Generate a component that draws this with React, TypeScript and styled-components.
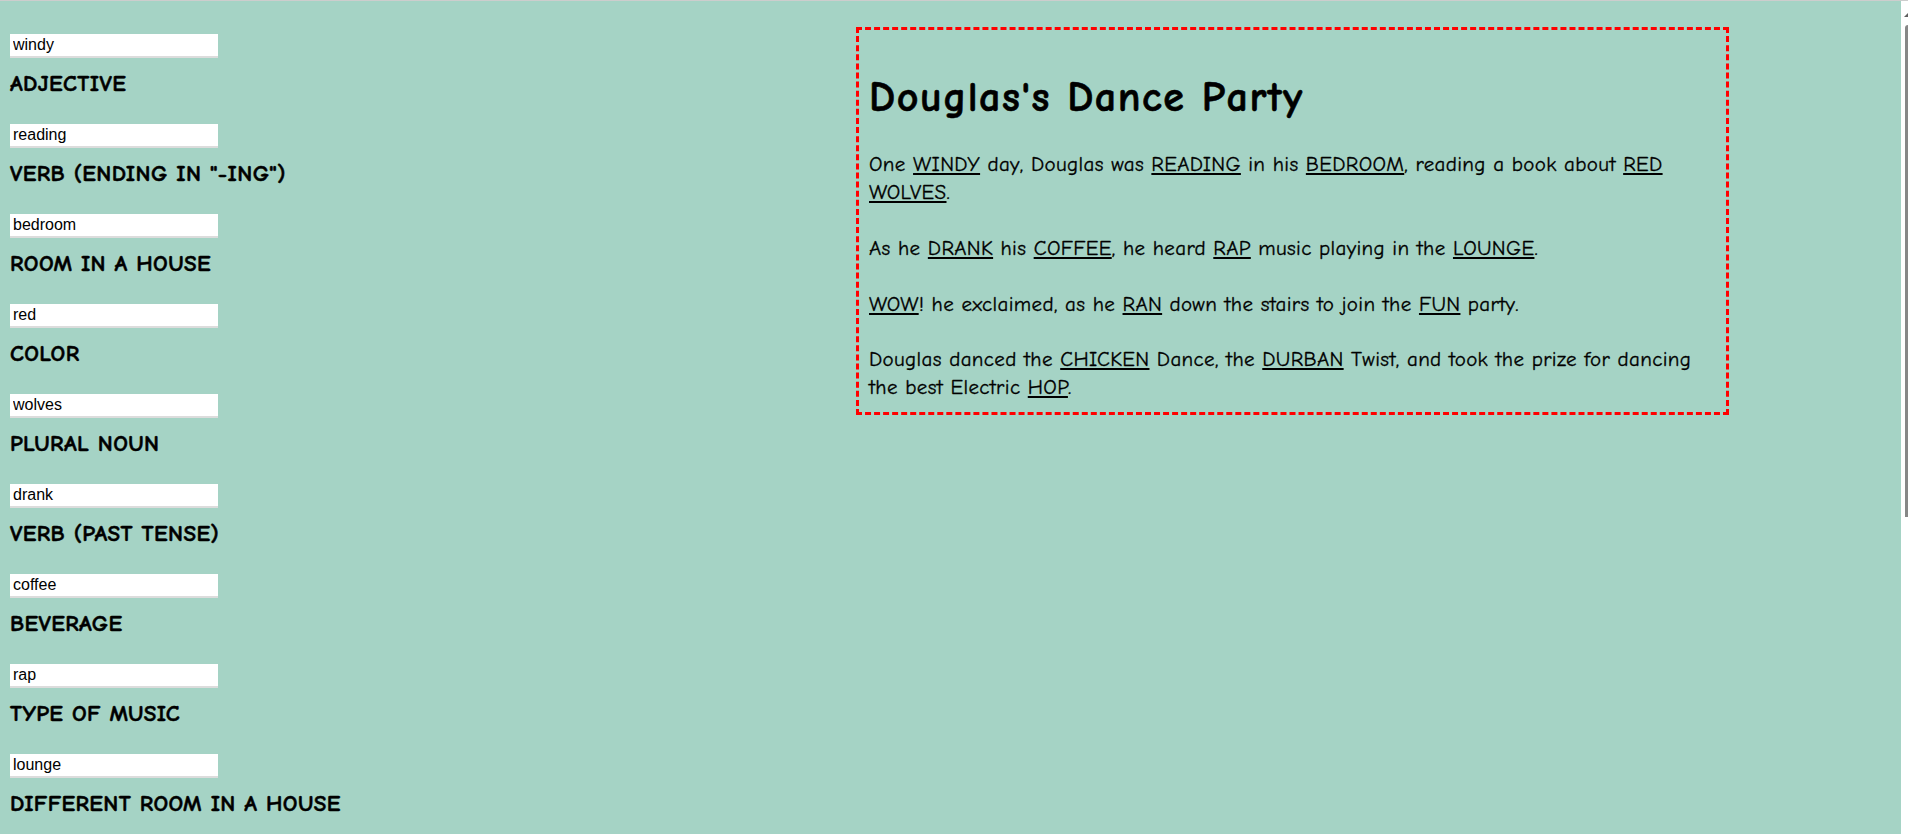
import React, { useState } from "react";
import styled, { createGlobalStyle } from "styled-components";

const FONT = `"Comic Sans MS", "Comic Neue", "Open Sans", sans-serif`;

const GlobalStyle = createGlobalStyle`
  html, body {
    margin: 0;
    padding: 0;
    background: #a5d3c5;
    overflow: hidden;
  }
  body {
    font-family: ${FONT};
    color: #000;
  }
`;

const Page = styled.div`
  display: flex;
  align-items: flex-start;
  border-top: 1px solid #cdcdcd;
  padding: 0 10px;
  min-height: 833px;
`;

const FormColumn = styled.div`
  width: 846px;
  flex: none;
  display: flex;
  flex-direction: column;
  padding-top: 33px;
`;

const Field = styled.div`
  display: flex;
  flex-direction: column;
  align-items: flex-start;
  height: 90px;
`;

const WordInput = styled.input`
  box-sizing: border-box;
  width: 208px;
  height: 24px;
  margin: 0;
  padding: 0 3px;
  border: none;
  border-bottom: 2px solid #dcdcdc;
  background: #fff;
  font-family: "Liberation Sans", Arial, sans-serif;
  font-size: 16px;
  color: #000;
  outline: none;
`;

const FieldLabel = styled.label`
  margin-top: 10.5px;
  font-family: ${FONT};
  font-weight: 700;
  font-size: 23px;
  line-height: 30px;
  letter-spacing: 0.4px;
  text-transform: uppercase;
  -webkit-text-stroke: 0.5px #000;
`;

const StoryBox = styled.section`
  box-sizing: border-box;
  width: 873px;
  flex: none;
  margin-top: 26px;
  padding: 10px;
  border: 3px dashed #ff0000;
`;

const Title = styled.h1`
  margin: 30px 0 25px;
  font-size: 42px;
  line-height: 56px;
  font-weight: 700;
  letter-spacing: 1.5px;
  -webkit-text-stroke: 0.6px #000;
`;

const StoryText = styled.div`
  font-size: 21px;
  line-height: 27.9px;
  letter-spacing: 0.35px;
  -webkit-text-stroke: 0.3px #000;
`;

const Blank = styled.span`
  text-decoration: underline;
  text-decoration-thickness: 1.5px;
  text-underline-offset: 2px;
`;

const Scrollbar = styled.div`
  position: fixed;
  top: 1px;
  right: 0;
  width: 7px;
  height: 833px;
  background: #ffffff;
`;

const ScrollArrow = styled.svg`
  position: absolute;
  top: 12px;
  left: 3px;
`;

const ScrollThumb = styled.div`
  position: absolute;
  top: 24px;
  left: 4px;
  width: 3px;
  height: 492px;
  background: #878787;
  border-top-left-radius: 3px;
`;

const FIELDS: { key: string; label: string; value: string }[] = [
  { key: "adj1", label: "Adjective", value: "windy" },
  { key: "verbIng", label: 'Verb (ending in "-ing")', value: "reading" },
  { key: "room1", label: "Room in a house", value: "bedroom" },
  { key: "color", label: "Color", value: "red" },
  { key: "pluralNoun", label: "Plural noun", value: "wolves" },
  { key: "verbPast1", label: "Verb (past tense)", value: "drank" },
  { key: "beverage", label: "Beverage", value: "coffee" },
  { key: "music", label: "Type of music", value: "rap" },
  { key: "room2", label: "Different room in a house", value: "lounge" },
  { key: "exclamation", label: "Exclamation", value: "wow" },
  { key: "verbPast2", label: "Verb (past tense)", value: "ran" },
  { key: "adj2", label: "Adjective", value: "fun" },
  { key: "animal", label: "Animal", value: "chicken" },
  { key: "city", label: "City", value: "durban" },
  { key: "noun", label: "Noun", value: "hop" },
];

export default function App() {
  const [words, setWords] = useState<Record<string, string>>(() =>
    Object.fromEntries(FIELDS.map((f) => [f.key, f.value]))
  );
  const w = (k: string) => <Blank>{(words[k] || "").toUpperCase()}</Blank>;

  return (
    <>
      <GlobalStyle />
      <Page>
        <FormColumn>
          {FIELDS.map((f) => (
            <Field key={f.key}>
              <WordInput
                id={f.key}
                type="text"
                value={words[f.key]}
                onChange={(e) => setWords({ ...words, [f.key]: e.target.value })}
              />
              <FieldLabel htmlFor={f.key}>{f.label}</FieldLabel>
            </Field>
          ))}
        </FormColumn>
        <StoryBox>
          <Title>Douglas's Dance Party</Title>
          <StoryText>
            One {w("adj1")} day, Douglas was {w("verbIng")} in his {w("room1")}, reading a book about{" "}
            {w("color")} {w("pluralNoun")}.
            <br />
            <br />
            As he {w("verbPast1")} his {w("beverage")}, he heard {w("music")} music playing in the {w("room2")}.
            <br />
            <br />
            {w("exclamation")}! he exclaimed, as he {w("verbPast2")} down the stairs to join the {w("adj2")} party.
            <br />
            <br />
            Douglas danced the {w("animal")} Dance, the {w("city")} Twist, and took the prize for dancing the best
            Electric {w("noun")}.
          </StoryText>
        </StoryBox>
      </Page>
      <Scrollbar>
        <ScrollArrow width="4" height="4" viewBox="0 0 4 4">
          <path d="M0 4 L4 0 L4 4 Z" fill="#606060" />
        </ScrollArrow>
        <ScrollThumb />
      </Scrollbar>
    </>
  );
}
